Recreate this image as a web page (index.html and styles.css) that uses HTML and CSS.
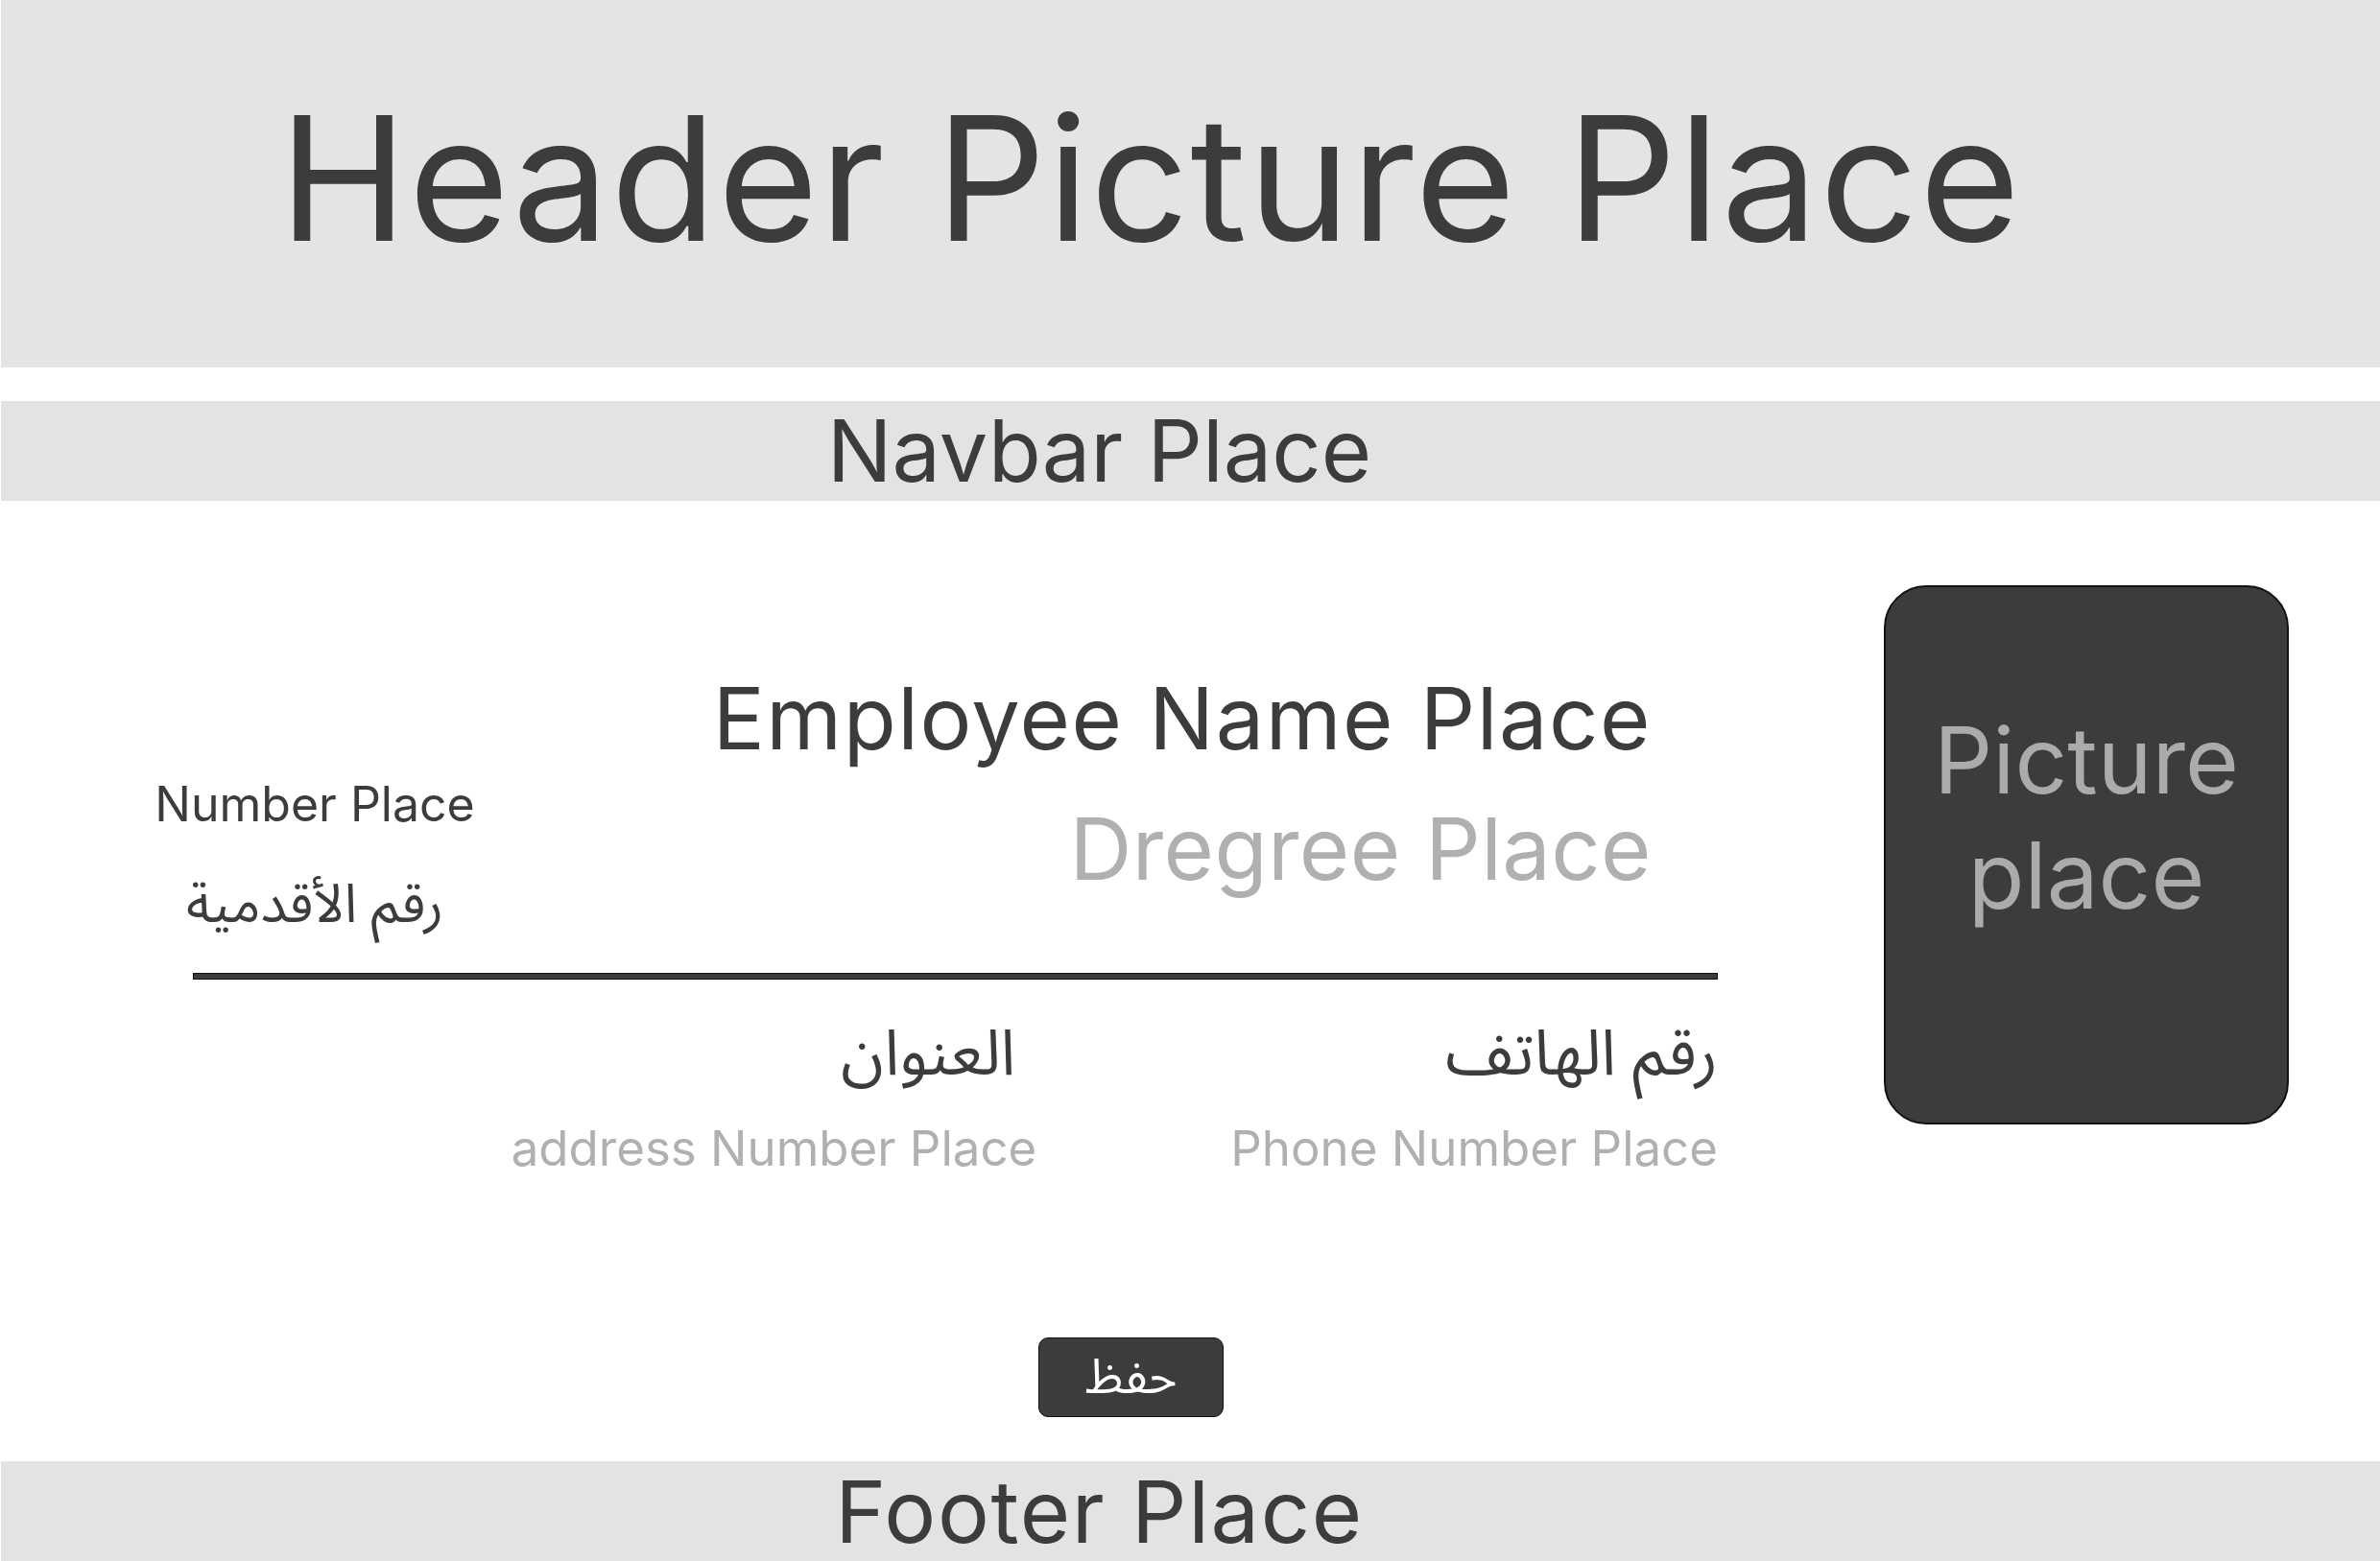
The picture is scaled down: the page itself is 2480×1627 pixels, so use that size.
FILE: index.html
```html
<!DOCTYPE html>
<html lang="ar">
<head>
<meta charset="utf-8">
<title>Employee Card</title>
<link rel="stylesheet" href="styles.css">
</head>
<body>
<header class="header-band">
  <div class="header-title">Header Picture Place</div>
</header>
<nav class="navbar">
  <div class="band-title">Navbar Place</div>
</nav>
<main class="main">
  <section class="profile">
    <div class="info">
      <div class="top-row">
        <div class="id-block">
          <div class="id-number">Number Place</div>
          <div class="id-label" dir="rtl">رقم الأقدمية</div>
        </div>
        <div class="name-block">
          <div class="emp-name">Employee Name Place</div>
          <div class="emp-degree">Dregree Place</div>
        </div>
      </div>
      <div class="divider"></div>
      <div class="contact-row">
        <div class="contact address">
          <div class="contact-label address-label" dir="rtl">العنوان</div>
          <div class="contact-value">address Number Place</div>
        </div>
        <div class="contact phone">
          <div class="contact-label" dir="rtl">رقم الهاتف</div>
          <div class="contact-value">Phone Number Place</div>
        </div>
      </div>
    </div>
    <div class="photo">
      <div class="photo-text">Picture<br>place</div>
    </div>
  </section>
  <div class="actions">
    <button class="save-btn" type="button" dir="rtl">حفظ</button>
  </div>
</main>
<footer class="footer">
  <div class="band-title footer-title">Footer Place</div>
</footer>
</body>
</html>
```
FILE: styles.css
```css
html, body {
  margin: 0;
  padding: 0;
  background: #ffffff;
}
body {
  width: 2480px;
  height: 1627px;
  overflow: hidden;
  font-family: Inter, "Noto Sans Arabic", "DejaVu Sans", sans-serif;
  color: #3c3c3c;
}
.header-band {
  height: 383px;
  box-sizing: border-box;
  background: #e4e4e4;
  margin-left: 1px;
  padding: 96px 84px 0 0;
  text-align: center;
}
.header-title {
  font-size: 180px;
  line-height: 1;
  letter-spacing: 1.3px;
  white-space: nowrap;
}
.navbar {
  margin-top: 35px;
  margin-left: 1px;
  height: 104px;
  box-sizing: border-box;
  background: #e3e3e3;
  padding: 7px 190px 0 0;
  text-align: center;
}
.band-title {
  font-size: 90px;
  line-height: 1;
  white-space: nowrap;
}
.footer-title {
  letter-spacing: 1.6px;
}
.main {
  height: 1001px;
  box-sizing: border-box;
  display: flex;
  flex-direction: column;
}
.profile {
  display: flex;
  align-items: flex-start;
  padding: 88px 95px 0 201px;
}
.info {
  width: 1589px;
  flex: none;
}
.top-row {
  display: flex;
  justify-content: space-between;
  align-items: flex-start;
  height: 404px;
}
.id-block {
  margin-left: -40px;
  margin-top: 203px;
  width: 334px;
  text-align: center;
}
.id-number {
  font-size: 50px;
  line-height: 1;
  white-space: nowrap;
}
.id-label {
  font-family: "Noto Sans Arabic", "DejaVu Sans", sans-serif;
  font-size: 56px;
  line-height: 1;
  margin-top: 52px;
  white-space: nowrap;
}
.name-block {
  margin-right: 69px;
  margin-top: 94px;
  text-align: right;
}
.emp-name {
  font-size: 90px;
  line-height: 1;
  letter-spacing: 1.5px;
  white-space: nowrap;
}
.emp-degree {
  font-size: 90px;
  line-height: 1;
  letter-spacing: 0.4px;
  color: #b0b0b0;
  margin-top: 46px;
  white-space: nowrap;
}
.divider {
  height: 5px;
  background: #3c3c3c;
  border: 1px solid #111111;
}
.contact-row {
  display: flex;
  justify-content: flex-end;
  gap: 202px;
  margin-top: 22px;
}
.contact {
  text-align: right;
}
.contact-label {
  font-family: "Noto Sans Arabic", "DejaVu Sans", sans-serif;
  font-size: 66px;
  line-height: 112px;
  color: #3c3c3c;
  white-space: nowrap;
}
.address-label {
  padding-right: 22px;
}
.contact-value {
  font-size: 51px;
  line-height: 1;
  color: #b0b0b0;
  margin-top: 16px;
  white-space: nowrap;
}
.photo {
  margin-left: 173px;
  width: 422px;
  height: 562px;
  box-sizing: border-box;
  flex: none;
  background: #3c3c3c;
  border: 2px solid #111111;
  border-radius: 44px;
  display: flex;
  justify-content: center;
  padding-top: 120px;
}
.photo-text {
  font-size: 96px;
  line-height: 120px;
  color: #ababab;
  text-align: center;
}
.actions {
  padding-left: 1082px;
  margin-top: auto;
  margin-bottom: 46px;
}
.save-btn {
  width: 193px;
  height: 83px;
  background: #3c3c3c;
  border: 1px solid #111111;
  border-radius: 10px;
  color: #ffffff;
  font-family: "Noto Sans Arabic", "DejaVu Sans", sans-serif;
  font-size: 50px;
  line-height: 1;
  padding: 0;
  cursor: pointer;
}
.footer {
  margin-left: 1px;
  height: 104px;
  box-sizing: border-box;
  background: #e3e3e3;
  padding: 8px 190px 0 0;
  text-align: center;
}
```
